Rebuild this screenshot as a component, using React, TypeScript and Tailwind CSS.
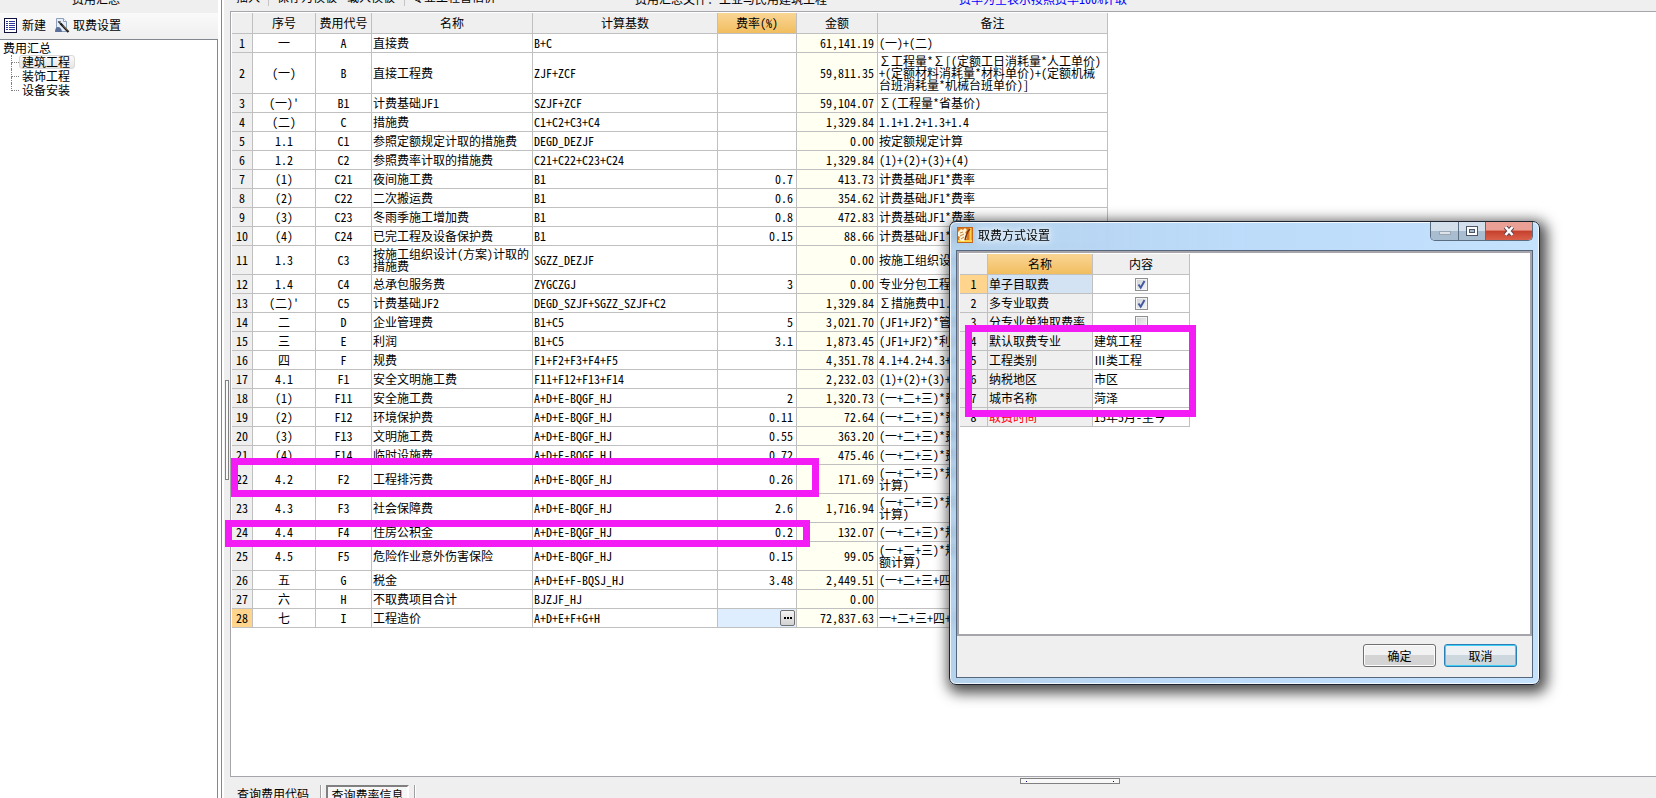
import React, { useState } from 'react';
import { clsx } from 'clsx';

interface FeeRow {
  no: string;
  code: string;
  name: string;
  base: string;
  rate?: string;
  amount: string;
  note?: string;
  height?: string;
}

const TWO_LINES = 'h-[29px]';
const THREE_LINES = 'h-[41px]';

const feeRows: FeeRow[] = [
  { no: '一', code: 'A', name: '直接费', base: 'B+C', amount: '61,141.19', note: '(一)+(二)' },
  {
    no: '(一)', code: 'B', name: '直接工程费', base: 'ZJF+ZCF', amount: '59,811.35', height: THREE_LINES,
    note: '∑工程量*∑[(定额工日消耗量*人工单价)\n+(定额材料消耗量*材料单价)+(定额机械\n台班消耗量*机械台班单价)]'
  },
  { no: "(一)'", code: 'B1', name: '计费基础JF1', base: 'SZJF+ZCF', amount: '59,104.07', note: '∑(工程量*省基价)' },
  { no: '(二)', code: 'C', name: '措施费', base: 'C1+C2+C3+C4', amount: '1,329.84', note: '1.1+1.2+1.3+1.4' },
  { no: '1.1', code: 'C1', name: '参照定额规定计取的措施费', base: 'DEGD_DEZJF', amount: '0.00', note: '按定额规定计算' },
  { no: '1.2', code: 'C2', name: '参照费率计取的措施费', base: 'C21+C22+C23+C24', amount: '1,329.84', note: '(1)+(2)+(3)+(4)' },
  { no: '(1)', code: 'C21', name: '夜间施工费', base: 'B1', rate: '0.7', amount: '413.73', note: '计费基础JF1*费率' },
  { no: '(2)', code: 'C22', name: '二次搬运费', base: 'B1', rate: '0.6', amount: '354.62', note: '计费基础JF1*费率' },
  { no: '(3)', code: 'C23', name: '冬雨季施工增加费', base: 'B1', rate: '0.8', amount: '472.83', note: '计费基础JF1*费率' },
  { no: '(4)', code: 'C24', name: '已完工程及设备保护费', base: 'B1', rate: '0.15', amount: '88.66', note: '计费基础JF1*费率' },
  { no: '1.3', code: 'C3', name: '按施工组织设计(方案)计取的\n措施费', base: 'SGZZ_DEZJF', amount: '0.00', note: '按施工组织设计', height: TWO_LINES },
  { no: '1.4', code: 'C4', name: '总承包服务费', base: 'ZYGCZGJ', rate: '3', amount: '0.00', note: '专业分包工程费' },
  { no: "(二)'", code: 'C5', name: '计费基础JF2', base: 'DEGD_SZJF+SGZZ_SZJF+C2', amount: '1,329.84', note: '∑措施费中1.1' },
  { no: '二', code: 'D', name: '企业管理费', base: 'B1+C5', rate: '5', amount: '3,021.70', note: '(JF1+JF2)*管理费' },
  { no: '三', code: 'E', name: '利润', base: 'B1+C5', rate: '3.1', amount: '1,873.45', note: '(JF1+JF2)*利润率' },
  { no: '四', code: 'F', name: '规费', base: 'F1+F2+F3+F4+F5', amount: '4,351.78', note: '4.1+4.2+4.3+4.4+4.5' },
  { no: '4.1', code: 'F1', name: '安全文明施工费', base: 'F11+F12+F13+F14', amount: '2,232.03', note: '(1)+(2)+(3)+(4)' },
  { no: '(1)', code: 'F11', name: '安全施工费', base: 'A+D+E-BQGF_HJ', rate: '2', amount: '1,320.73', note: '(一+二+三)*费率' },
  { no: '(2)', code: 'F12', name: '环境保护费', base: 'A+D+E-BQGF_HJ', rate: '0.11', amount: '72.64', note: '(一+二+三)*费率' },
  { no: '(3)', code: 'F13', name: '文明施工费', base: 'A+D+E-BQGF_HJ', rate: '0.55', amount: '363.20', note: '(一+二+三)*费率' },
  { no: '(4)', code: 'F14', name: '临时设施费', base: 'A+D+E-BQGF_HJ', rate: '0.72', amount: '475.46', note: '(一+二+三)*费率' },
  { no: '4.2', code: 'F2', name: '工程排污费', base: 'A+D+E-BQGF_HJ', rate: '0.26', amount: '171.69', note: '(一+二+三)*规定\n计算)', height: TWO_LINES },
  { no: '4.3', code: 'F3', name: '社会保障费', base: 'A+D+E-BQGF_HJ', rate: '2.6', amount: '1,716.94', note: '(一+二+三)*规定\n计算)', height: TWO_LINES },
  { no: '4.4', code: 'F4', name: '住房公积金', base: 'A+D+E-BQGF_HJ', rate: '0.2', amount: '132.07', note: '(一+二+三)*规定' },
  { no: '4.5', code: 'F5', name: '危险作业意外伤害保险', base: 'A+D+E-BQGF_HJ', rate: '0.15', amount: '99.05', note: '(一+二+三)*规定\n额计算)', height: TWO_LINES },
  { no: '五', code: 'G', name: '税金', base: 'A+D+E+F-BQSJ_HJ', rate: '3.48', amount: '2,449.51', note: '(一+二+三+四)' },
  { no: '六', code: 'H', name: '不取费项目合计', base: 'BJZJF_HJ', amount: '0.00' },
  { no: '七', code: 'I', name: '工程造价', base: 'A+D+E+F+G+H', amount: '72,837.63', note: '一+二+三+四+五' }
];

const textSettings = [
  { name: '默认取费专业', value: '建筑工程' },
  { name: '工程类别', value: 'Ⅲ类工程' },
  { name: '纳税地区', value: '市区' },
  { name: '城市名称', value: '菏泽' },
  { name: '取费时间', value: '15年5月-至今', alert: true }
];

const cell = 'border-r border-b border-[#c0c0c0] p-0 whitespace-pre';
const headCell = `${cell} h-[21px] bg-[#efefef] font-normal`;
const activeHead = 'bg-linear-to-b from-[#f9d594] to-[#f1be5e]';

const ListIcon = () => (
  <svg width="13" height="15" viewBox="0 0 13 15" shapeRendering="crispEdges" aria-hidden="true">
    <rect x="0.5" y="0.5" width="12" height="14" fill="#fff" stroke="#10103c" />
    <path d="M2 3.5h2M2 5.5h2M2 7.5h2M2 9.5h2M2 11.5h2M5 3.5h6M5 5.5h6M5 7.5h6M5 9.5h6M5 11.5h6" stroke="#2a35a0" />
  </svg>
);

const SettingsIcon = () => (
  <svg width="15" height="15" viewBox="0 0 15 15" aria-hidden="true">
    <path d="M1.5.5h7l3 3v10h-10z" fill="#e6eefa" stroke="#8fa0bd" />
    <path d="M8.5.5v3h3" fill="#fff" stroke="#8fa0bd" />
    <path d="M0 14c0-3 1-5 3-5s4 2 4 5z" fill="#5a7096" />
    <path d="M3 3.5l3 2.5M5 3v3" stroke="#444" strokeWidth="1.2" />
    <path d="M5.5 5.5l8 8.5" fill="none" stroke="#1c1c1c" strokeWidth="2.2" />
    <path d="M8 7.5l5 5" stroke="#c9a468" strokeWidth="0.8" />
  </svg>
);

const DialogIcon = () => (
  <svg width="16" height="16" viewBox="0 0 16 16" aria-hidden="true">
    <rect x="0.5" y="0.5" width="15" height="15" fill="#d9791c" stroke="#c4661a" />
    <path d="M13.5 1v14M1 14h14" stroke="#ffd24a" strokeWidth="2" />
    <path d="M1 5l3-3 2 1 2-2 2 2-2 3 2 1-2 3 2 1-3 3H4L2 12l1-2-2-1z" fill="#fff3d8" />
    <path d="M3 6l3-1M3 9l4-2M4 12l3-2" stroke="#c98235" strokeWidth="1" fill="none" />
    <path d="M13 2c-3 3-4 6-5 11" stroke="#7d2f12" strokeWidth="1.4" fill="none" />
  </svg>
);

const FeeTable: React.FC = () => (
  <table className="w-[876px] table-fixed border-separate border-spacing-0">
    <colgroup>
      <col className="w-[21px]" />
      <col className="w-[63px]" />
      <col className="w-[56px]" />
      <col className="w-[161px]" />
      <col className="w-[185px]" />
      <col className="w-[79px]" />
      <col className="w-[81px]" />
      <col className="w-[230px]" />
    </colgroup>
    <thead>
      <tr>
        <th className={headCell} />
        <th className={headCell}>序号</th>
        <th className={headCell}>费用代号</th>
        <th className={headCell}>名称</th>
        <th className={headCell}>计算基数</th>
        <th className={clsx(headCell, activeHead)}>费率(%)</th>
        <th className={headCell}>金额</th>
        <th className={headCell}>备注</th>
      </tr>
    </thead>
    <tbody>
      {feeRows.map((row, i) => {
        const selected = i === feeRows.length - 1;
        return (
          <tr key={row.code} className={row.height ?? 'h-[19px]'}>
            <th scope="row" className={clsx(cell, 'font-normal', selected ? 'bg-[#ffd48c]' : 'bg-[#efefef]')}>{i + 1}</th>
            <td className={`${cell} text-center`}>{row.no}</td>
            <td className={`${cell} text-center`}>{row.code}</td>
            <td className={`${cell} pl-px`}>{row.name}</td>
            <td className={`${cell} pl-px`}>{row.base}</td>
            <td className={clsx(cell, 'text-right', selected ? 'bg-[#dfeeff] pr-px' : 'pr-[3px]')}>
              {selected ? (
                <button
                  type="button"
                  aria-label="选择费率"
                  className="ml-auto flex h-4 w-[15px] items-center justify-center gap-px rounded-xs border border-[#707070] bg-linear-to-b from-[#f4f4f4] to-[#d2d2d2]"
                >
                  <span className="size-[2px] bg-black" />
                  <span className="size-[2px] bg-black" />
                  <span className="size-[2px] bg-black" />
                </button>
              ) : row.rate}
            </td>
            <td className={`${cell} bg-[#fffff2] pr-[3px] text-right`}>{row.amount}</td>
            <td className={`${cell} overflow-hidden pl-px`}>{row.note}</td>
          </tr>
        );
      })}
    </tbody>
  </table>
);

interface CheckProps {
  label: string;
  checked: boolean;
  onChange: () => void;
}

const Check: React.FC<CheckProps> = ({ label, checked, onChange }) => (
  <span className="mx-auto grid size-[13px] *:col-start-1 *:row-start-1">
    <input
      type="checkbox"
      aria-label={label}
      checked={checked}
      onChange={onChange}
      className="size-[13px] appearance-none border border-[#8e8f8f] bg-linear-to-br from-[#cdd0d4] to-[#f8f8f8] shadow-[inset_0_0_0_1px_#f4f4f4]"
    />
    {checked && (
      <svg className="pointer-events-none" width="13" height="13" viewBox="0 0 13 13" aria-hidden="true">
        <path d="M3.5 6.5l2.2 3.2L9.5 3" fill="none" stroke="#4258a0" strokeWidth="2" />
      </svg>
    )}
  </span>
);

const SettingsDialog: React.FC = () => {
  const [checks, setChecks] = useState([
    { name: '单子目取费', on: true },
    { name: '多专业取费', on: true },
    { name: '分专业单独取费率', on: false }
  ]);

  const toggle = (index: number) => {
    setChecks(checks.map((c, i) => (i === index ? { ...c, on: !c.on } : c)));
  };

  return (
    <section
      role="dialog"
      aria-label="取费方式设置"
      className="absolute top-[221px] left-[949px] flex h-[464px] w-[591px] flex-col rounded-[7px] border border-[#1d2430] bg-linear-to-r from-[#a9cbea]/85 via-[#b5d8fa]/90 to-[#bfdffd]/90 px-[6px] pb-[6px] shadow-[3px_4px_14px_4px_rgba(0,0,0,0.7),inset_0_0_0_1px_rgba(255,255,255,0.8)] backdrop-blur-[3px]"
    >
      <header className="flex h-[28px] shrink-0 items-start justify-between">
        <div className="flex items-center gap-[5px] pt-[5px] pl-px">
          <DialogIcon />
          <h2 className="[text-shadow:0_0_6px_#fff,0_0_8px_#fff]">取费方式设置</h2>
        </div>
        <div className="flex h-[19px] overflow-hidden rounded-b-[5px] border border-t-0 border-[#5c6c80]">
          <button type="button" aria-label="最小化" className="flex w-[28px] items-center justify-center border-r border-[#5c6c80] bg-linear-to-b from-[#d3dfeb] from-50% to-[#a9bdd0] to-50%">
            <span className="mt-1 h-[4px] w-[12px] border border-[#98a6b5] bg-[#dbe2e8]" />
          </button>
          <button type="button" aria-label="最大化" className="flex w-[27px] items-center justify-center border-r border-[#5c6c80] bg-linear-to-b from-[#d3dfeb] from-50% to-[#a9bdd0] to-50%">
            <svg width="12" height="10" viewBox="0 0 12 10" aria-hidden="true">
              <rect x="0.5" y="0.5" width="11" height="9" fill="#fff" stroke="#4b5568" />
              <rect x="3.5" y="3.5" width="5" height="3" fill="#a9bdd0" stroke="#4b5568" />
            </svg>
          </button>
          <button type="button" aria-label="关闭" className="flex w-[46px] items-center justify-center bg-linear-to-b from-[#eaa094] from-45% via-[#c5402c] via-50% to-[#d9604a]">
            <svg width="12" height="10" viewBox="0 0 12 10" aria-hidden="true">
              <path d="M2.5 1l7 8M9.5 1l-7 8" stroke="#5a4550" strokeWidth="4.5" />
              <path d="M2.5 1l7 8M9.5 1l-7 8" stroke="#fff" strokeWidth="2.6" />
            </svg>
          </button>
        </div>
      </header>

      <div className="flex flex-1 flex-col border border-[#56677d] bg-[#efefef] pb-px">
        <div className="flex-1 border-2 border-[#a5a5ab] bg-white pt-px pl-px">
          <table className="w-[230px] table-fixed border-separate border-spacing-0">
            <colgroup>
              <col className="w-[28px]" />
              <col className="w-[105px]" />
              <col className="w-[97px]" />
            </colgroup>
            <thead>
              <tr>
                <th className={headCell} />
                <th className={clsx(headCell, activeHead)}>名称</th>
                <th className={headCell}>内容</th>
              </tr>
            </thead>
            <tbody>
              {checks.map((c, i) => (
                <tr key={c.name} className="h-[19px]">
                  <th scope="row" className={clsx(cell, 'font-normal', i === 0 ? 'bg-[#ffd48c]' : 'bg-[#efefef]')}>{i + 1}</th>
                  <td className={clsx(cell, 'pl-px', i === 0 ? 'bg-[#d3e3f3]' : 'bg-[#efefef]')}>{c.name}</td>
                  <td className={cell}>
                    <Check label={c.name} checked={c.on} onChange={() => toggle(i)} />
                  </td>
                </tr>
              ))}
              {textSettings.map((s, i) => (
                <tr key={s.name} className="h-[19px]">
                  <th scope="row" className={`${cell} bg-[#efefef] font-normal`}>{checks.length + i + 1}</th>
                  <td className={clsx(cell, 'bg-[#efefef] pl-px', s.alert && 'text-[#ff0000]')}>{s.name}</td>
                  <td className={`${cell} pl-px`}>{s.value}</td>
                </tr>
              ))}
            </tbody>
          </table>
        </div>
        <footer className="flex h-[40px] shrink-0 items-center justify-end gap-2 pr-[15px] pb-px">
          <button type="button" className="h-[23px] w-[73px] rounded-[3px] border border-[#707070] bg-linear-to-b from-[#f2f2f2] from-50% to-[#d4d4d4] to-50% shadow-[inset_0_0_0_1px_#fcfcfc]">
            确定
          </button>
          <button type="button" className="h-[23px] w-[73px] rounded-[3px] border border-[#2c7fb5] bg-linear-to-b from-[#edf1f3] from-50% to-[#cdd7de] to-50% shadow-[inset_0_0_0_1px_#3fd0f8]">
            取消
          </button>
        </footer>
      </div>
    </section>
  );
};

const treeItems = ['建筑工程', '装饰工程', '设备安装'];

const Sidebar: React.FC = () => (
  <aside className="flex w-[218px] shrink-0 flex-col">
    <div className="flex h-[13px] shrink-0 items-end justify-center overflow-hidden bg-[#efefef] pr-[26px] pb-[7px] leading-[14px]">
      <h1>费用汇总</h1>
    </div>
    <div className="flex h-[26px] shrink-0 items-center gap-[9px] bg-linear-to-b from-[#fafafa] to-[#efefef] pb-[2px] pl-1">
      <button type="button" className="flex items-center gap-[5px]">
        <ListIcon />
        新建
      </button>
      <button type="button" className="flex items-center gap-[3px]">
        <SettingsIcon />
        取费设置
      </button>
    </div>
    <div className="flex-1 border-t border-r border-[#828790] pt-px pl-[3px]">
      <div className="h-[14px] leading-[13px]">费用汇总</div>
      <ul className="pl-2">
        {treeItems.map((item, i) => (
          <li key={item} className="flex h-[14px] leading-[12px]">
            <span className="flex w-[8px] flex-col">
              <span className="h-[8px] border-b border-l border-dotted border-[#808080]" />
              {i < treeItems.length - 1 && <span className="h-[6px] border-l border-dotted border-[#808080]" />}
            </span>
            <span
              className={clsx(
                'rounded-[3px] border px-[2px]',
                i === 0 ? 'border-[#d9d9d9] bg-linear-to-b from-[#fafafa] to-[#e5e5e5] pr-[4px]' : 'border-transparent'
              )}
            >
              {item}
            </span>
          </li>
        ))}
      </ul>
    </div>
  </aside>
);

const Separator = () => <span className="h-[18px] w-px bg-[#c5c5c5]" />;

const App: React.FC = () => (
  <div className="relative flex h-screen overflow-hidden bg-white font-['Noto_Sans_CJK_SC',sans-serif] text-[12px] leading-[12px] text-black [font-feature-settings:'hwid']">
    <Sidebar />
    <div className="w-[6px] shrink-0 bg-white">
      <div className="ml-[3px] h-full w-px bg-[#828790]" />
    </div>
    <div className="w-[6px] shrink-0 bg-[#efefef] pt-[380px] pl-px">
      <div className="h-[100px] w-[4px] border border-[#808080] bg-[#f8f8f8]" />
    </div>

    <main className="flex min-w-0 flex-1 flex-col bg-[#efefef]">
      <div className="flex h-[11px] shrink-0 items-end overflow-hidden pb-[5px] leading-[14px] whitespace-nowrap">
        <div className="flex items-center pl-[6px]">
          <button type="button" className="pr-[8px]">插入</button>
          <Separator />
          <button type="button" className="px-[8px]">保存为模板</button>
          <button type="button" className="px-[2px] pr-[9px]">载入模板</button>
          <Separator />
          <button type="button" className="px-[7px]">专业工程暂估价</button>
        </div>
        <span className="ml-[132px]">费用汇总文件：工业与民用建筑工程</span>
        <span className="ml-[132px] text-[#0000ff]">费率为空表示按照费率100%计取</span>
      </div>

      <div className="min-h-0 flex-1 border-t border-b border-l border-[#a5a5ab] bg-white pt-px pl-px">
        <FeeTable />
      </div>

      <div className="flex h-[8px] shrink-0 justify-center pt-px pl-[253px]">
        <div className="flex h-[6px] w-[100px] items-center justify-between border border-[#808080] bg-[#f8f8f8] px-[5px]">
          <span className="size-px bg-[#000080]" />
          <span className="size-px bg-[#000080]" />
        </div>
      </div>
      <div className="flex h-[13px] shrink-0 items-start overflow-hidden pl-[7px]">
        <button type="button" className="flex h-[22px] w-[72px] items-start pt-[3px]">查询费用代码</button>
        <span className="ml-[11px] h-[22px] w-[2px] border-l border-[#a0a0a0] bg-white" />
        <button type="button" className="ml-[4px] flex h-[22px] w-[83px] items-start justify-center border-2 border-[#808080] border-r-white bg-[#f7f7f7] pt-[2px]">
          查询费率信息
        </button>
        <span className="ml-[5px] h-[22px] w-[2px] border-l border-[#a0a0a0] bg-white" />
      </div>
    </main>

    <SettingsDialog />

    {/* Highlight frames drawn over the form */}
    <div className="pointer-events-none absolute top-[458px] left-[231px] h-[39px] w-[588px] border-[7px] border-[#f41cf4]" />
    <div className="pointer-events-none absolute top-[520px] left-[225px] h-[27px] w-[585px] border-[7px] border-[#f41cf4]" />
    <div className="pointer-events-none absolute top-[325px] left-[965px] h-[92px] w-[231px] border-[7px] border-[#f41cf4]" />
  </div>
);

export default App;
